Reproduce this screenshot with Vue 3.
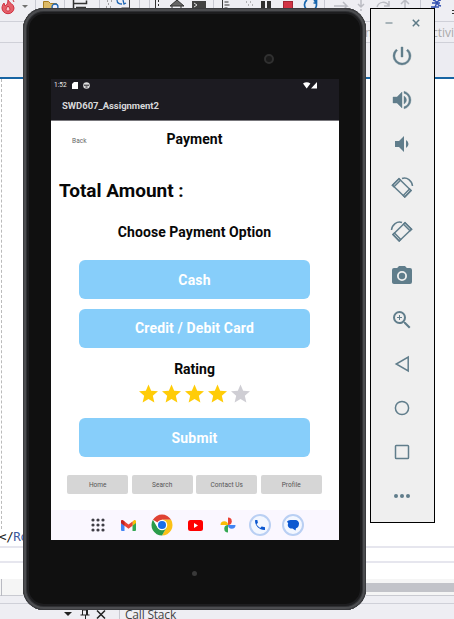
<script setup>
const stars = [true, true, true, true, false]
const tabs = ['Home', 'Search', 'Contact Us', 'Profile']
const starPath = 'M12 17.27 18.18 21l-1.64-7.03L22 9.24l-7.19-.61L12 2 9.19 8.63 2 9.24l5.46 4.73L5.82 21z'
</script>

<template>
  <div class="desktop">
    <div class="ide">
      <div class="ide-toolbar">
        <svg width="454" height="21" viewBox="0 0 454 21" fill="none">
          <path d="M8 0c1 3 6 4 6 8a6 5.700 0 0 1-12 0c0-2 1-4 2-5l1 3c2-1 3-3 3-6z" fill="#e4606a" stroke="#cf3040" />
          <path d="M13 0l1 2M8 6c-3 3-2 5 0 5s3-2 0-5z" stroke="#cf3040" fill="#f7c9cc" />
          <path d="M22 5h6l-3 3z" fill="#717171" />
          <path d="M35.500 0v21M64.500 0v9M99.500 0v21M139.500 0v21M149.500 0v21M213.500 0v21M324.500 0v21M420.500 0v21" stroke="#c8c9d2" />
          <path d="M43.500 1.500h5l2 2h6v6h-13z" fill="#dcb967" stroke="#a67c22" />
          <circle cx="55" cy="7" r="3" fill="#eef" stroke="#1e66b4" stroke-width="1.300" />
          <path d="M73.500 0v9M73.500 3.500h13v-3M76 7.500h10" stroke="#333" stroke-width="1.500" />
          <path d="M107 1h1m3 0h1m-4 3h1m-3 3h1m3 0h1" stroke="#555" />
          <path d="M117 0c0 4 3 4 5 4m1-4 1 4 2-1" stroke="#1e66b4" stroke-width="1.300" />
          <path d="M129.500 0v8h-8" stroke="#444" />
          <path d="M155.500 0v8M158.500 0v2m0 2v2" stroke="#333" />
          <path d="M170 6l7-6 7 6zM172 6v3m9-3v3" stroke="#333" fill="#666" />
          <rect x="192" y="1" width="14" height="10" fill="#424242" /><path d="M194 3l3 2-3 2" stroke="#ddd" />
          <path d="M222.500 0v9m2-7h4m-4 3h5m-5 3h3" stroke="#333" />
          <path d="M246 2h1m3 0h1m-3 3h1m3 0h1" stroke="#777" />
          <path d="M261 1h4v9h-4zM267 1h4v9h-4z" fill="#303030" />
          <rect x="283.500" y="1.500" width="9" height="9" fill="#d13445" stroke="#a32634" />
          <path d="M307 0a6 6 0 1 0 7 0M316.500 0v3h-3" stroke="#1766ae" stroke-width="1.700" />
          <path d="M334 6h13l-4-4m4 4-4 4M361 0v7m-3-3 3 3 3-3M361 9v2M377 7c2-6 9-6 12-1m0-5v5h-5M405 9V1m-4 3 4-4 4 4" stroke="#bbbcc3" stroke-width="1.500" />
          <path d="M433 0c6 1 2 5 8 6m0-6c-7 0-3 9-10 10m1-7h8m-9 4h8" stroke="#3350b0" stroke-width="1.400" />
          <path d="M452 10.500h2m-2 3h2" stroke="#333" />
        </svg>
      </div>
      <div class="ide-crumbs"><span class="crumb-m">m</span><span>ctivi</span></div>
      <div class="ide-tabs"></div>
      <div class="editor">
        <div class="gutter"></div>
        <div class="code"><span class="punct">&lt;/</span>Root</div>
      </div>
      <div class="strip"></div>
      <div class="strip second"></div>
      <div class="scroll-row"><div class="scroll-left"></div><div class="scroll-bar"></div></div>
      <div class="divider"></div>
      <div class="panel-heads">
        <div class="dots left-dots"></div>
        <svg width="54" height="15" viewBox="0 0 54 15" fill="none" stroke="#222">
          <path d="M7 8h8l-4 4z" fill="#222" stroke="none" />
          <path d="M25.500 6v5m5-5v5m-1-5v5m-4-5h5m-7 5h9m-4 0v4" />
          <path d="M40 6.500l8 8m0-8-8 8" stroke-width="1.500" />
        </svg>
        <div class="panel-title">Call Stack</div>
        <div class="dots right-dots"></div>
      </div>
    </div>

    <div class="device">
      <div class="bezel-top"><span class="camera"></span></div>
      <div class="screen">
        <header class="app-head">
          <div class="status">
            <span>1:52</span>
            <svg width="6" height="7" viewBox="0 0 6 7"><path d="M2 0h4v7H0V2z" fill="#fff" /></svg>
            <svg width="7" height="7" viewBox="0 0 7 7"><circle cx="3.500" cy="3.500" r="3.300" fill="#ddd" /><path d="M1 3.200h5M2.500 5h2" stroke="#1c1b21" /></svg>
            <svg class="signal" width="15" height="7" viewBox="0 0 15 7" fill="#fff"><path d="M0 1.500Q3.700-1 7.400 1.500L3.700 6.500zM14 0v6.500H8z" /></svg>
          </div>
          <div class="app-name">SWD607_Assignment2</div>
        </header>
        <main class="page">
          <div class="title-row">
            <span class="back">Back</span>
            <h1>Payment</h1>
          </div>
          <h2 class="total">Total Amount :</h2>
          <h3 class="choose">Choose Payment Option</h3>
          <button class="action">Cash</button>
          <button class="action">Credit / Debit Card</button>
          <h3 class="rating">Rating</h3>
          <div class="stars">
            <svg v-for="(on, i) in stars" :key="i" viewBox="2 2 20 19" :class="{ on }"><path :d="starPath" /></svg>
          </div>
          <button class="action submit">Submit</button>
          <nav class="tabs">
            <button v-for="t in tabs" :key="t">{{ t }}</button>
          </nav>
        </main>
        <footer class="dock">
          <svg width="14" height="14" viewBox="0 0 14 14" fill="#3e3d45">
            <template v-for="r in 3" :key="r">
              <circle v-for="c in 3" :key="c" :cx="c * 5 - 3" :cy="r * 5 - 3" r="1.600" />
            </template>
          </svg>
          <svg class="gmail" width="15" height="11" viewBox="0 0 15 11">
            <path d="M0 2h3.500v9H1a1 1 0 0 1-1-1z" fill="#4285f4" />
            <path d="M11.500 2H15v8a1 1 0 0 1-1 1h-2.500z" fill="#34a853" />
            <path d="M11.500 1.400 13 .3c1-.7 2 .1 2 1.200V3l-3.500 2.700z" fill="#fbbc04" />
            <path d="M0 3V1.500C0 .4 1-.4 2 .3l5.500 4.200 4-3.100v4.300l-4 3-4-3z" fill="#ea4335" />
            <path d="M0 3V1.500C0 .7.600.1 1.300.1L3.500 1.500v4.200z" fill="#c5221f" />
          </svg>
          <svg class="chrome" width="22" height="22" viewBox="0 0 48 48">
            <circle cx="24" cy="24" r="23" fill="#fff" />
            <path d="M24 24 4.100 12.500A23 23 0 0 1 43.900 12.500H24z" fill="#df4234" />
            <path d="M43.900 12.500A23 23 0 0 1 24 47L34 29.700 24 12.500z" fill="#fbc116" />
            <path d="M24 47A23 23 0 0 1 4.100 12.500L14 29.700 34 29.700z" fill="#2a9b4a" />
            <circle cx="24" cy="24" r="11.500" fill="#fff" /><circle cx="24" cy="24" r="8.800" fill="#1a6fe8" />
          </svg>
          <svg width="15" height="11" viewBox="0 0 15 11"><rect width="15" height="11" rx="2.500" fill="#f00" /><path d="M6 3v5l4-2.500z" fill="#fff" /></svg>
          <svg width="16" height="16" viewBox="0 0 16 16">
            <path d="M8 8V.500a3.750 3.750 0 0 1 0 7.500z" fill="#ea4335" />
            <path d="M8 8h7.500a3.750 3.750 0 0 1-7.500 0z" fill="#4285f4" />
            <path d="M8 8v7.500a3.750 3.750 0 0 1 0-7.500z" fill="#34a853" />
            <path d="M8 8H.500a3.750 3.750 0 0 1 7.500 0z" fill="#fbbc04" />
          </svg>
          <span class="round"><svg width="10" height="10" viewBox="0 0 18 18"><path d="M16 12.400c-1.200 0-2.400-.2-3.500-.6-.4-.1-.8 0-1 .3l-2.200 2.200A15 15 0 0 1 2.700 7.700l2.200-2.200c.3-.3.4-.7.300-1C4.800 3.400 4.600 2.200 4.600 1c0-.6-.4-1-1-1H1C.4 0 0 .4 0 1c0 9.400 7.600 17 17 17 .6 0 1-.4 1-1v-3.600c0-.6-.4-1-1-1z" fill="#0b57d0" /></svg></span>
          <span class="round"><svg width="12" height="11" viewBox="0 0 12 11"><path d="M3.500 0h5A3.500 3.500 0 0 1 12 3.800C12 6.500 10.500 8 9 8.300L8.500 10.500 5.500 8.500h-2A3.500 3.500 0 0 1 1.200 3.500L0 1.500Q1 0 3.500 0z" fill="#0b57d0" /></svg></span>
        </footer>
      </div>
      <div class="bezel-bottom"><span class="mic"></span></div>
    </div>

    <div class="controls">
      <div class="window-buttons">
        <svg width="8" height="8" viewBox="0 0 8 8"><path d="M.500 4h7" stroke="#8a9ba3" stroke-width="1.400" /></svg>
        <svg width="8" height="8" viewBox="0 0 8 8"><path d="M.800.800l6.400 6.400m0-6.400L.800 7.200" stroke="#5d7a86" stroke-width="1.500" /></svg>
      </div>
      <div class="ctl"><svg viewBox="0 0 24 24"><path d="M13 3h-2v10h2zm4.830 2.170-1.420 1.420A6.920 6.920 0 0 1 19 12a7 7 0 1 1-11.420-5.420L6.170 5.170A8.960 8.960 0 0 0 3 12a9 9 0 0 0 18 0c0-2.740-1.230-5.180-3.170-6.830z" stroke="#607d8b" stroke-width=".4" /></svg></div>
      <div class="ctl"><svg viewBox="0 0 24 24"><path d="M3 9v6h4l5 5V4L7 9zm13.500 3A4.500 4.500 0 0 0 14 7.970v8.050A4.470 4.470 0 0 0 16.500 12zM14 3.230v2.060a7 7 0 0 1 0 13.420v2.060a9 9 0 0 0 0-17.540z" stroke="#607d8b" stroke-width=".4" /></svg></div>
      <div class="ctl"><svg viewBox="0 0 24 24"><path d="M18.500 12A4.500 4.500 0 0 0 16 7.970v8.050A4.470 4.470 0 0 0 18.500 12zM5 9v6h4l5 5V4L9 9z" /></svg></div>
      <div class="ctl"><svg viewBox="0 0 24 24" class="line"><path d="M9 2.700 21 14.500 14.800 21 2.500 9.200z" /><path d="M9 2.700 10.500 4.200 4 10.700 2.500 9.200zM19.500 13 21 14.500 14.800 21 13.300 19.500z" /><path d="M12 2.500C17 .5 22 5 22.500 10" /></svg></div>
      <div class="ctl"><svg viewBox="0 0 24 24" class="line flip"><path d="M9 2.700 21 14.500 14.800 21 2.500 9.200z" /><path d="M9 2.700 10.500 4.200 4 10.700 2.500 9.200zM19.500 13 21 14.500 14.800 21 13.300 19.500z" /><path d="M12 2.500C17 .5 22 5 22.500 10" /></svg></div>
      <div class="ctl"><svg viewBox="0 0 24 24"><circle cx="12" cy="12" r="3.200" /><path d="M9 2 7.170 4H4a2 2 0 0 0-2 2v12c0 1.100.9 2 2 2h16a2 2 0 0 0 2-2V6a2 2 0 0 0-2-2h-3.170L15 2zm3 15a5 5 0 1 1 0-10 5 5 0 0 1 0 10z" /></svg></div>
      <div class="ctl"><svg viewBox="0 0 24 24"><path d="M15.500 14h-.79l-.28-.27A6.470 6.470 0 0 0 16 9.500 6.500 6.500 0 1 0 9.500 16c1.610 0 3.090-.59 4.230-1.570l.27.28v.79l5 4.990L20.490 19zm-6 0a4.500 4.500 0 1 1 0-9 4.500 4.500 0 0 1 0 9zM12 10h-2v2H9v-2H7V9h2V7h1v2h2z" /></svg></div>
      <div class="ctl"><svg viewBox="0 0 24 24" class="line"><path d="M18.200 5v14L6.200 12z" /></svg></div>
      <div class="ctl"><svg viewBox="0 0 24 24" class="line"><circle cx="12" cy="12" r="6.600" /></svg></div>
      <div class="ctl"><svg viewBox="0 0 24 24" class="line"><rect x="5.500" y="5.500" width="13" height="13" rx=".8" /></svg></div>
      <div class="ctl"><svg viewBox="0 0 24 24"><circle cx="6" cy="12" r="2" /><circle cx="12" cy="12" r="2" /><circle cx="18" cy="12" r="2" /></svg></div>
    </div>
  </div>
</template>

<style>
body { margin: 0; overflow: hidden; }
</style>

<style scoped>
* { box-sizing: border-box; }
svg { display: block; flex: none; }
button, h1, h2, h3 { margin: 0; padding: 0; border: 0; font-family: inherit; }
.desktop { position: relative; width: 454px; height: 619px; overflow: hidden; font-family: Roboto, "Liberation Sans", sans-serif; }
.ide { display: flex; flex-direction: column; height: 619px; background: #fff; }
.ide > * { flex: none; }
.ide-toolbar { height: 22px; background: #eeeef3; border-bottom: 1px solid #cfd0d8; }
.ide-crumbs { height: 21px; display: flex; justify-content: flex-end; align-items: center; gap: 58px; background: #eeeef3; border-bottom: 1px solid #cfd0d8; color: #aaa; font: 12px "Open Sans", sans-serif; white-space: nowrap; }
.ide-crumbs span:last-child { width: 22px; }
.crumb-m { width: 9px; }
.ide-tabs { height: 36px; background: #ececf2; border-bottom: 2px solid #1764a3; }
.editor { height: 467px; display: flex; align-items: flex-end; }
.gutter { width: 2px; height: 450px; align-self: flex-start; border-right: 1px dashed #bbb; }
.code { margin-left: -3px; padding-bottom: 1px; font: 12.500px/16px "DejaVu Sans Mono", monospace; letter-spacing: -.4px; color: #3c5aa0; }
.punct { color: #222; }
.strip { height: 15px; border-top: 2px solid #e6e6ee; }
.second { height: 18px; }
.scroll-row { height: 17px; display: flex; align-items: center; background: #f5f5f5; border-bottom: 1px solid #c9cad1; }
.scroll-left { width: 2px; height: 17px; border-right: 1px solid #b9bac2; }
.scroll-bar { margin-left: 198px; flex: 1; height: 9px; background: #c2c3c9; }
.divider { height: 8px; background: #eeeef3; border-bottom: 1px solid #cfd0d8; }
.panel-heads { height: 15px; display: flex; align-items: center; background: #eeeef3; }
.dots { height: 8px; align-self: flex-end; background-image: radial-gradient(circle, #a9aab2 .5px, transparent .7px), radial-gradient(circle, #a9aab2 .5px, transparent .7px); background-size: 4px 4px; background-position: 0 0, 2px 2px; }
.left-dots { width: 57px; }
.panel-title { width: 70px; margin-left: 8px; padding-left: 5px; border-left: 1px solid #c7c8d0; color: #444; font: 12px/21px "Open Sans", sans-serif; height: 15px; white-space: nowrap; letter-spacing: -.2px; }
.right-dots { flex: 1; }

.device { position: absolute; left: 23px; top: 8px; width: 343px; height: 602px; padding: 0 27px 0 28px; display: flex; flex-direction: column; border-radius: 21px; background: #101010; box-shadow: inset 0 0 0 1px #3a3b3e, inset 0 0 0 3px #4c4d50, inset 0 0 0 4px #303134, inset 0 0 0 6px #1d1d1f; }
.bezel-top { height: 71px; padding: 46px 65px 0 0; display: flex; justify-content: flex-end; }
.camera { width: 10px; height: 10px; border: 2px solid #303030; border-radius: 50%; background: #191919; }
.bezel-bottom { flex: 1; display: flex; justify-content: center; padding: 31px 1px 0 0; }
.mic { width: 5px; height: 5px; border-radius: 50%; background: #393939; }
.screen { width: 288px; height: 461px; display: flex; flex-direction: column; background: #fff; }
.app-head { height: 42px; background: #1c1b21; border-bottom: 1px solid #77767b; color: #ececec; }
.status { height: 12px; padding: 0 21px 0 3px; display: flex; align-items: center; gap: 5px; font-size: 6.500px; }
.signal { margin-left: auto; }
.app-name { padding: 0 11px; line-height: 30px; font-size: 9.500px; font-weight: 700; letter-spacing: -.04px; color: #d8d8da; }
.page { height: 389px; padding-right: 1px; display: flex; flex-direction: column; align-items: center; color: #080808; }
.title-row { width: 100%; height: 36px; padding: 0 21px; display: grid; grid-template-columns: 1fr auto 1fr; align-items: center; }
.back { font-size: 6.500px; letter-spacing: .1px; color: #666; padding-top: 3px; }
h1 { font-size: 14px; font-weight: 700; letter-spacing: .05px; }
.total { align-self: flex-start; margin: 19px 0 0 8px; font-size: 19px; line-height: 30px; font-weight: 700; }
.choose { margin-top: 15px; font-size: 14px; line-height: 22px; font-weight: 700; margin-bottom: 17px; letter-spacing: .07px; }
.action { flex: none; width: 231px; height: 39px; margin-bottom: 9.500px; border-radius: 6px; background: #87cefa; color: #fff; font-size: 14px; font-weight: 700; letter-spacing: .15px; }
.rating { margin-top: 1px; font-size: 14px; line-height: 22px; font-weight: 700; }
.stars { display: flex; gap: 4px; margin-top: 4px; margin-bottom: 15px; padding-right: 1px; }
.stars svg { width: 19px; height: 19px; fill: #cfced4; }
.stars .on { fill: #ffcc08; }
.submit { margin-bottom: 18px; }
.tabs { display: flex; gap: 3.500px; }
.tabs button { width: 61px; height: 19px; border-radius: 2px; background: #d6d6d6; color: #555; font-size: 6.500px; letter-spacing: .05px; }
.dock { flex: 1; padding: 0 30px 0 31px; display: grid; grid-template-columns: repeat(7, 1fr); place-items: center; background: #faf7ff; }
.gmail { margin-right: 4px; }
.chrome { margin-right: 2px; }
.round { width: 22px; height: 22px; border: 2px solid #b9cff3; border-radius: 50%; display: grid; place-items: center; background: #f3f7ff; }

.controls { position: absolute; left: 370px; top: 8px; width: 65px; height: 515px; border: 1px solid #000; background: #efefef; }
.window-buttons { height: 25px; padding: 3px 14px 0 14px; display: flex; justify-content: space-between; align-items: center; }
.ctl { height: 44px; display: grid; place-items: center; padding: 0 1px 1px 0; }
.ctl svg { width: 24px; height: 24px; fill: #607d8b; }
.ctl .line { fill: none; stroke: #607d8b; stroke-width: 1.500; }
.flip { transform: scaleX(-1); }
</style>
